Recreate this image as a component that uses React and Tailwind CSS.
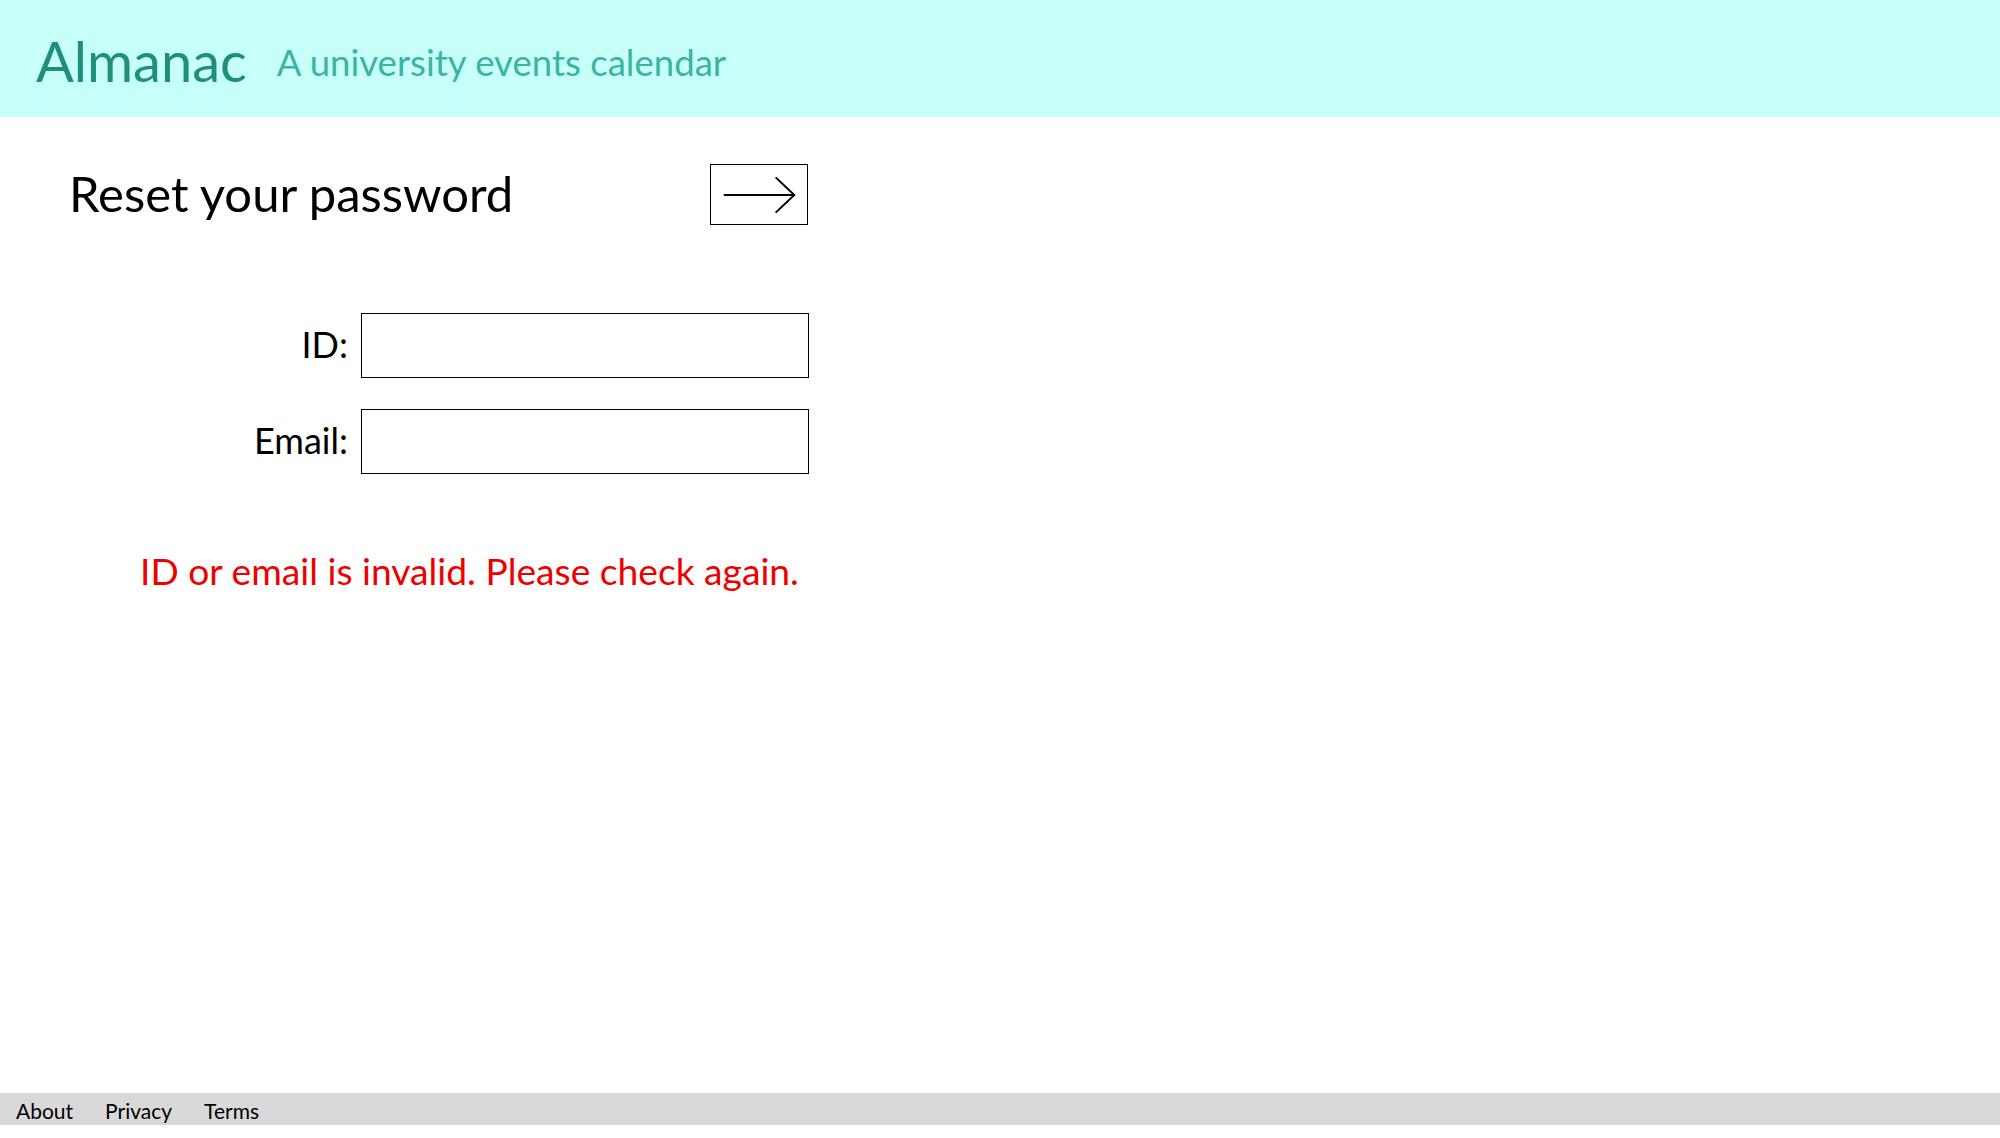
import { useState } from 'react';

export default function App() {
    const [id, setId] = useState('');
    const [email, setEmail] = useState('');

    return (
        <div className="h-screen flex flex-col bg-white text-black" style={{ fontFamily: 'Lato, "Open Sans", sans-serif' }}>
            <header className="h-[117px] shrink-0 bg-[#c7fff9] flex items-center px-[36px] gap-[30px]">
                <h1 className="text-[56px] leading-none text-[#1f8f7b] mt-[4px]">Almanac</h1>
                <span className="text-[36.6px] leading-none text-[#3cb4a2] mt-[8px]">A university events calendar</span>
            </header>

            <main className="flex-1 pl-[69px] pt-[47px]">
                <div className="w-[739px] flex justify-between items-center">
                    <h2 className="text-[49px] leading-none mt-[-2px]">Reset your password</h2>
                    <button className="w-[98px] h-[61px] border-[1.5px] border-black flex items-center justify-center cursor-pointer">
                        <svg width="98" height="61" viewBox="0 0 98 61" fill="none" stroke="black" strokeWidth="2">
                            <line x1="13" y1="31" x2="85" y2="31" />
                            <polyline points="66,13 85,31 66,49" />
                        </svg>
                    </button>
                </div>

                <form className="mt-[88px] w-[740px] flex flex-col gap-[31px]">
                    <div className="flex justify-end items-center gap-[13px]">
                        <label className="text-[36px] leading-none mt-[-3px]">ID:</label>
                        <input value={id} onChange={(e) => setId(e.target.value)} className="w-[448px] h-[65px] border border-black outline-none px-3 text-2xl" />
                    </div>
                    <div className="flex justify-end items-center gap-[13px]">
                        <label className="text-[36px] leading-none mt-[-3px]">Email:</label>
                        <input value={email} onChange={(e) => setEmail(e.target.value)} className="w-[448px] h-[65px] border border-black outline-none px-3 text-2xl" />
                    </div>
                </form>

                <p className="mt-[78px] pl-[71px] text-[37.2px] leading-none text-[#ee0000]">ID or email is invalid. Please check again.</p>
            </main>

            <footer className="h-[32px] shrink-0 bg-[#d9d9d9] flex items-center gap-[32px] px-[16px] pt-[3px] text-[21px]">
                <a href="#" className="text-black">About</a>
                <a href="#" className="text-black">Privacy</a>
                <a href="#" className="text-black">Terms</a>
            </footer>
            <div className="h-[13px] shrink-0" />
        </div>
    );
}
